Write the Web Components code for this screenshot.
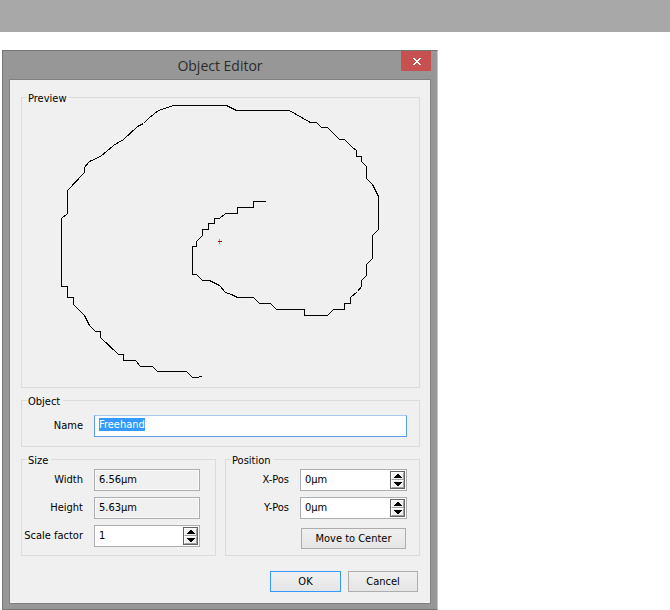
<!DOCTYPE html>
<html lang="en">
<head>
<meta charset="utf-8">
<title>Object Editor</title>
<style>
  body {
    margin: 0;
    background: #fff;
    color: #000;
    font: 11px/13px "DejaVu Sans Condensed", "DejaVu Sans", sans-serif;
  }
</style>
</head>
<body>
<object-editor-page></object-editor-page>

<script>
const define = (name, html, setup) => {
  const template = document.createElement("template");
  template.innerHTML = html;
  customElements.define(name, class extends HTMLElement {
    connectedCallback() {
      if (this.shadowRoot) return;
      const root = this.attachShadow({ mode: "open" });
      root.append(template.content.cloneNode(true));
      if (setup) setup(this, root);
    }
  });
};

/* Titled frame */
define("group-box", `
  <style>
    :host { display: grid; min-width: 0; }
    fieldset {
      margin: 0; border: 1px solid #dcdcdc; min-width: 0;
      padding: var(--group-padding, 0);
    }
    legend { margin-left: 5px; padding: 0 3px 0 1px; height: 13px; line-height: 15px; }
  </style>
  <fieldset><legend></legend><slot></slot></fieldset>`,
  (host, root) => {
    root.querySelector("legend").textContent = host.getAttribute("label");
  });

/* Push button */
define("push-button", `
  <style>
    :host { display: grid; }
    button {
      box-sizing: border-box; height: 21px; padding: 0 6px;
      border: 1px solid #adadad; border-radius: 0;
      background: linear-gradient(#f0f0f0, #e5e5e5);
      color: inherit; font: inherit; text-align: center; white-space: nowrap;
    }
    :host([default]) button { border-color: #3399ff; }
  </style>
  <button type="button"><slot></slot></button>`);

/* Up and down arrows of a number field */
define("spin-buttons", `
  <style>
    :host { display: grid; grid-template-rows: 1fr 1fr; width: 15px; margin: 1px; box-sizing: border-box; border: 1px solid #646464; }
    button {
      display: grid; place-items: center; margin: 0; padding: 0;
      border: 1px solid; border-color: #fff #a0a0a0 #a0a0a0 #fff; background: #f0f0f0; min-height: 0;
    }
    svg { display: block; }
  </style>
  <button type="button" aria-label="Increase"><svg width="8" height="4" shape-rendering="crispEdges"><path d="M3 0h2v1h1v1h1v1h1v1H0V3h1V2h1V1h1z"/></svg></button>
  <button type="button" aria-label="Decrease"><svg width="8" height="4" shape-rendering="crispEdges"><path d="M0 0h8v1H7v1H6v1H5v1H3V3H2V2H1V1H0z"/></svg></button>`);

/* Label with its text box */
define("text-field", `
  <style>
    :host { display: grid; grid-template-columns: var(--label-width, 61px) minmax(0, 1fr); column-gap: 11px; align-items: center; }
    label { text-align: right; white-space: nowrap; margin-bottom: 1px; }
    .box {
      display: flex; box-sizing: border-box; height: 22px; min-width: 0;
      border: 1px solid #abadb3; background: #fff;
    }
    input {
      flex: 1; min-width: 0; margin: 0; padding: 0 0 3px 4px; border: 0; border-radius: 0;
      outline: 0; background: transparent; color: inherit; font: inherit;
    }
    input::selection { background: #3399ff; color: #fff; }
    :host([readonly]) .box { background: #f0f0f0; box-shadow: inset 0 0 0 1px #fafafa; }
    :host([readonly]) input, :host([spin]) input { padding-bottom: 1px; }
    :host([active]) .box { border-color: #a6cbee #569de5 #569de5 #569de5; }
    spin-buttons { display: none; }
    :host([spin]) spin-buttons { display: grid; }
  </style>
  <label for="control"></label>
  <div class="box"><input id="control" type="text"><spin-buttons></spin-buttons></div>`,
  (host, root) => {
    const input = root.querySelector("input");
    root.querySelector("label").textContent = host.getAttribute("label");
    input.value = host.getAttribute("value");
    input.readOnly = host.hasAttribute("readonly");
    if (host.hasAttribute("active")) {
      input.focus();
      input.select();
    }
  });

/* Freehand outline */
define("shape-preview", `
  <style>
    :host { display: block; }
    svg { display: block; width: 100%; height: auto; }
  </style>
  <svg viewBox="21.5 103.5 397 283" role="img" aria-label="Freehand shape" fill="none" shape-rendering="crispEdges">
    <path stroke="#000" d="M265 201H253V207H237V213H225L219 218H214V223H208V229H202V235L196 241V246H192V274H196L202 280H209L219 285L225 292L231 294L237 297H253L259 303H270L276 309H304V315H327L333 309H344V303H350V297L357 291L361 286V280L366 275V264L372 258V235L378 229V196L372 184L366 178V166L361 161V156H356V150L352 147L344 139H339L327 127H321L316 122H310L301 117L289 110H236L226 105H173L158 110L149 117L143 123L137 126L123 139L113 145L100 156L89 161L84 167V172L67 190V213L61 218V286H67V297H73V304L84 315L89 325L95 331H100V337L118 354H123V360H135L140 366H152L157 371H186L192 377H198L199 376H201"/>
    <path stroke="#c08080" d="M219 238.500V243.500"/>
    <path stroke="#a00000" d="M217.500 241H221.500"/>
  </svg>`);

/* Window frame with title bar */
define("dialog-window", `
  <style>
    :host {
      display: block; box-sizing: border-box;
      border: 1px solid #767676; border-right-color: #c8c8c8;
      padding: 0 6px 5px; background: #979797;
    }
    header { display: grid; grid-template-columns: 30px 1fr 30px; height: 28px; }
    h1 {
      margin: 0; align-self: center; text-align: center; white-space: nowrap; color: #2c2c2c;
      font: 14px/26px "Open Sans", "Noto Sans", sans-serif; padding-top: 2px; box-sizing: border-box;
      grid-column: 2;
    }
    .close {
      width: 30px; height: 20px; margin: 0; padding: 0 0 0 1px; border: 0;
      display: grid; place-items: center; background: #c75050;
    }
    main { display: block; border: 1px solid #808080; padding: 11px 10px 11px 11px; background: #f0f0f0; }
  </style>
  <header>
    <h1></h1>
    <button class="close" type="button" aria-label="Close"><svg width="8" height="7" shape-rendering="crispEdges" fill="#fff"><path d="M0 0h2v1h1v1h2V1h1V0h2v1H7v1H6v1H5v1h1v1h1v1h1v1H6V6H5V5H3v1H2v1H0V6h1V5h1V4h1V3H2V2H1V1H0z"/></svg></button>
  </header>
  <main><slot></slot></main>`,
  (host, root) => {
    root.querySelector("h1").textContent = host.getAttribute("heading");
  });

define("object-editor-page", `
  <style>
    :host { display: block; }
    .band { height: 32px; background: #a8a8a8; }
    dialog-window { max-width: 436px; margin: 18px 2px 0; }
    .stack { display: grid; gap: 6px; }
    .pair { display: grid; grid-template-columns: 1fr 1fr; gap: 9px; }
    .rows { display: grid; gap: 6px; }
    .object { --group-padding: 8px 12px 9px 0; }
    .size { --group-padding: 3px 15px 8px 0; }
    .position { --group-padding: 3px 12px 6px 0; --label-width: 63px; }
    .center { margin: 3px 1px 0 75px; }
    .actions { display: grid; grid-template-columns: 71px 70px; justify-content: end; gap: 7px; margin: 15px 2px 0 0; }
  </style>
  <div class="band"></div>
  <dialog-window heading="Object Editor">
    <div class="stack">
      <group-box label="Preview"><shape-preview></shape-preview></group-box>
      <group-box class="object" label="Object"><text-field label="Name" value="Freehand" active></text-field></group-box>
      <div class="pair">
        <group-box class="size" label="Size">
          <div class="rows">
            <text-field label="Width" value="6.56µm" readonly></text-field>
            <text-field label="Height" value="5.63µm" readonly></text-field>
            <text-field label="Scale factor" value="1" spin></text-field>
          </div>
        </group-box>
        <group-box class="position" label="Position">
          <div class="rows">
            <text-field label="X-Pos" value="0µm" spin></text-field>
            <text-field label="Y-Pos" value="0µm" spin></text-field>
            <push-button class="center">Move to Center</push-button>
          </div>
        </group-box>
      </div>
    </div>
    <div class="actions">
      <push-button default>OK</push-button>
      <push-button>Cancel</push-button>
    </div>
  </dialog-window>`);
</script>
</body>
</html>
